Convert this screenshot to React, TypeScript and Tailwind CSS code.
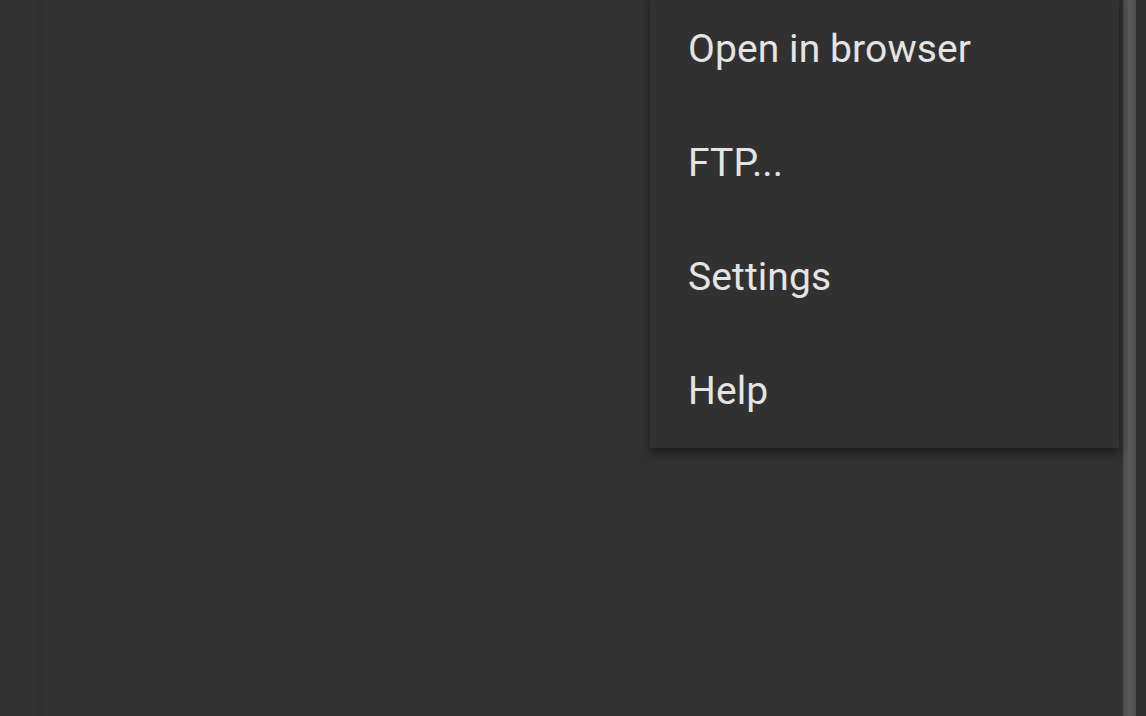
const menuItems = ["Open in browser", "FTP...", "Settings", "Help"];

function OverflowMenu() {
  return (
    <div className="absolute left-[650px] top-[-8px] w-[469px] bg-[#313131] shadow-[0_6px_10px_rgba(0,0,0,0.45)]">
      {menuItems.map((item) => (
        <div
          key={item}
          className="flex h-[114px] items-center pl-[38px] text-[39px] leading-none tracking-[0.1px] text-[#e4e4e4]"
          style={{ fontFamily: "Roboto, 'Noto Sans', sans-serif" }}
        >
          {item}
        </div>
      ))}
    </div>
  );
}

export default function App() {
  return (
    <div className="relative flex h-[716px] w-[1146px] overflow-hidden bg-[#323232]">
      {/* faint left column edge */}
      <div className="ml-[36px] h-full w-[9px] bg-[#303030]" />
      <div className="flex-1" />
      {/* scrollbar strip */}
      <div className="h-full w-[13px] bg-gradient-to-r from-[#4a4a4a] via-[#5a5a5a] to-[#4e4e4e]" />
      <div className="h-full w-[10px] bg-[#2e2e2e]" />

      <OverflowMenu />
    </div>
  );
}
